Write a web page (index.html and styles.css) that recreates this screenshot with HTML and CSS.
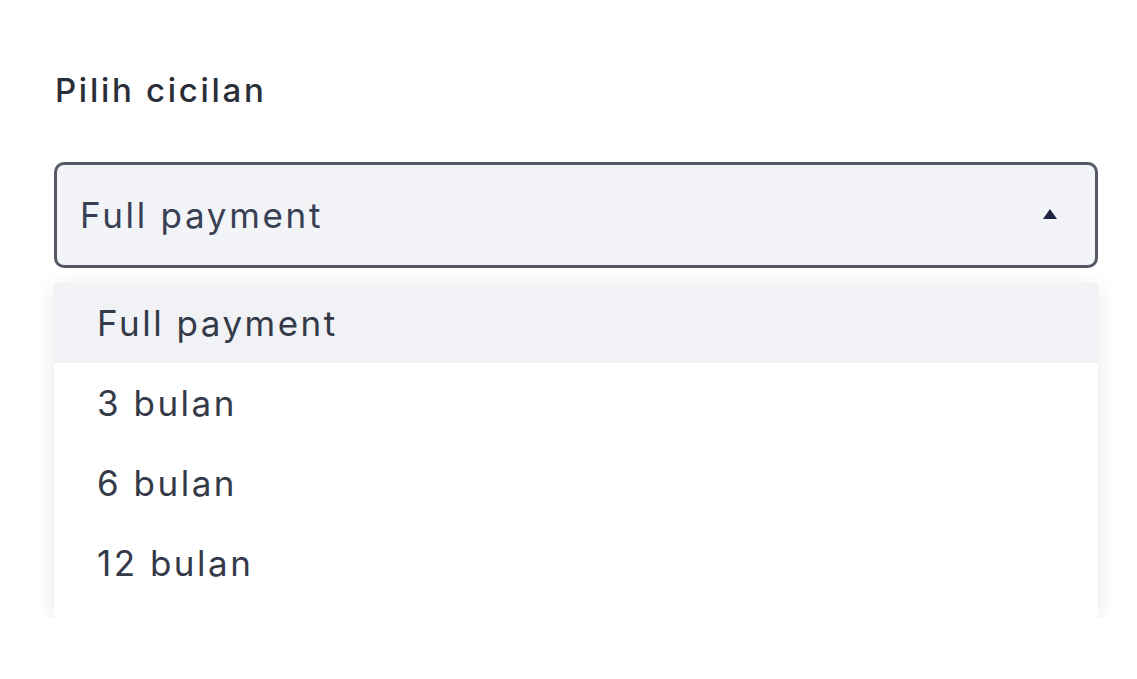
FILE: index.html
```html
<!DOCTYPE html>
<html lang="id">
<head>
  <meta charset="UTF-8">
  <meta name="viewport" content="width=device-width, initial-scale=1.0">
  <title>Pilih cicilan</title>
  <link rel="stylesheet" href="styles.css">
</head>
<body>

<div class="campo">
  <label class="etiqueta">Pilih cicilan</label>
  <div class="selector">
    <span class="valor">Full payment</span>
    <svg class="flecha" width="16" height="12" viewBox="0 0 16 12"><path d="M8 1 L15 11 L1 11 Z" fill="#1f2440"/></svg>
  </div>
  <ul class="opciones">
    <li class="activa">Full payment</li>
    <li>3 bulan</li>
    <li>6 bulan</li>
    <li>12 bulan</li>
  </ul>
</div>

</body>
</html>
```

FILE: styles.css
```css
body { margin: 0; background: #fff; font-family: Inter, "Noto Sans", sans-serif; color: #2c313d; }
.campo { padding: 68px 39px 0 54px; }
.etiqueta { display: block; font-size: 33px; font-weight: 500; line-height: 44px; letter-spacing: 2.7px; margin-bottom: 50px; padding-left: 1px; color: #2a2e38; }
.selector { box-sizing: border-box; height: 106px; border: 3px solid #545965; border-radius: 10px; background: #f3f4f8; display: flex; align-items: center; justify-content: space-between; padding: 0 37px 0 23px; }
.valor { font-size: 35px; letter-spacing: 2.7px; color: #3a4054; }
.flecha { margin-top: -2px; }
.opciones { list-style: none; margin: 15px 0 0; padding: 0 0 15px; background: #fff; box-shadow: 0 4px 20px rgba(20, 25, 40, 0.1); }
.opciones li { height: 80px; line-height: 80px; padding-left: 43px; font-size: 35px; letter-spacing: 2.5px; color: #343a48; }
.opciones li.activa { background: #f1f2f6; }
```
